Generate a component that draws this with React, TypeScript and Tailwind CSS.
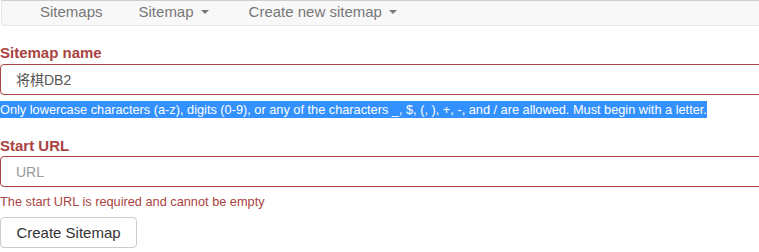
import React from "react";

function Caret() {
  return (
    <span className="ml-[7px] inline-block h-0 w-0 border-l-[4px] border-r-[4px] border-t-[4px] border-l-transparent border-r-transparent border-t-[#777] align-middle" />
  );
}

export default function App() {
  return (
    <div
      className="h-[252px] w-[759px] overflow-hidden bg-white text-[14px] leading-[20px] text-[#333]"
      style={{ fontFamily: '"Liberation Sans", Arial, "Noto Sans CJK SC", sans-serif' }}
    >
      <div className="ml-[1px] flex h-[26px] w-[900px] items-center rounded-bl-[4px] border-b border-l border-t border-[#e7e7e7] border-t-[#d0d0d0] bg-[#f8f8f8] pb-[3px] text-[15px] text-[#777]">
        <span className="ml-[38px]">Sitemaps</span>
        <span className="ml-[36px] flex items-center">
          Sitemap
          <Caret />
        </span>
        <span className="ml-[40px] flex items-center">
          Create new sitemap
          <Caret />
        </span>
      </div>

      <div className="mt-[17px] text-[15px] font-bold text-[#a94442]">Sitemap name</div>
      <div className="mt-[1px] flex h-[31px] w-[900px] items-center rounded-[4px] border border-[#a94442] pl-[15px] text-[#555]">
        将棋DB2
      </div>
      <div className="mt-[5px] whitespace-nowrap text-[12.75px]">
        <span className="bg-[#3390ff] py-[1px] text-white">
          Only lowercase characters (a-z), digits (0-9), or any of the characters _, $, (, ), +, -, and / are allowed. Must begin with a letter.
        </span>
      </div>

      <div className="mt-[16px] text-[15px] font-bold text-[#a94442]">Start URL</div>
      <div className="flex h-[31px] w-[900px] items-center rounded-[4px] border border-[#a94442] pl-[15px] text-[#999]">
        URL
      </div>
      <div className="mt-[5px] text-[12.75px] text-[#a94442]">The start URL is required and cannot be empty</div>
      <button className="mt-[5px] flex h-[31px] w-[137px] items-center justify-center rounded-[4px] border border-[#ccc] bg-white text-[15px] text-[#333]">
        Create Sitemap
      </button>
    </div>
  );
}
